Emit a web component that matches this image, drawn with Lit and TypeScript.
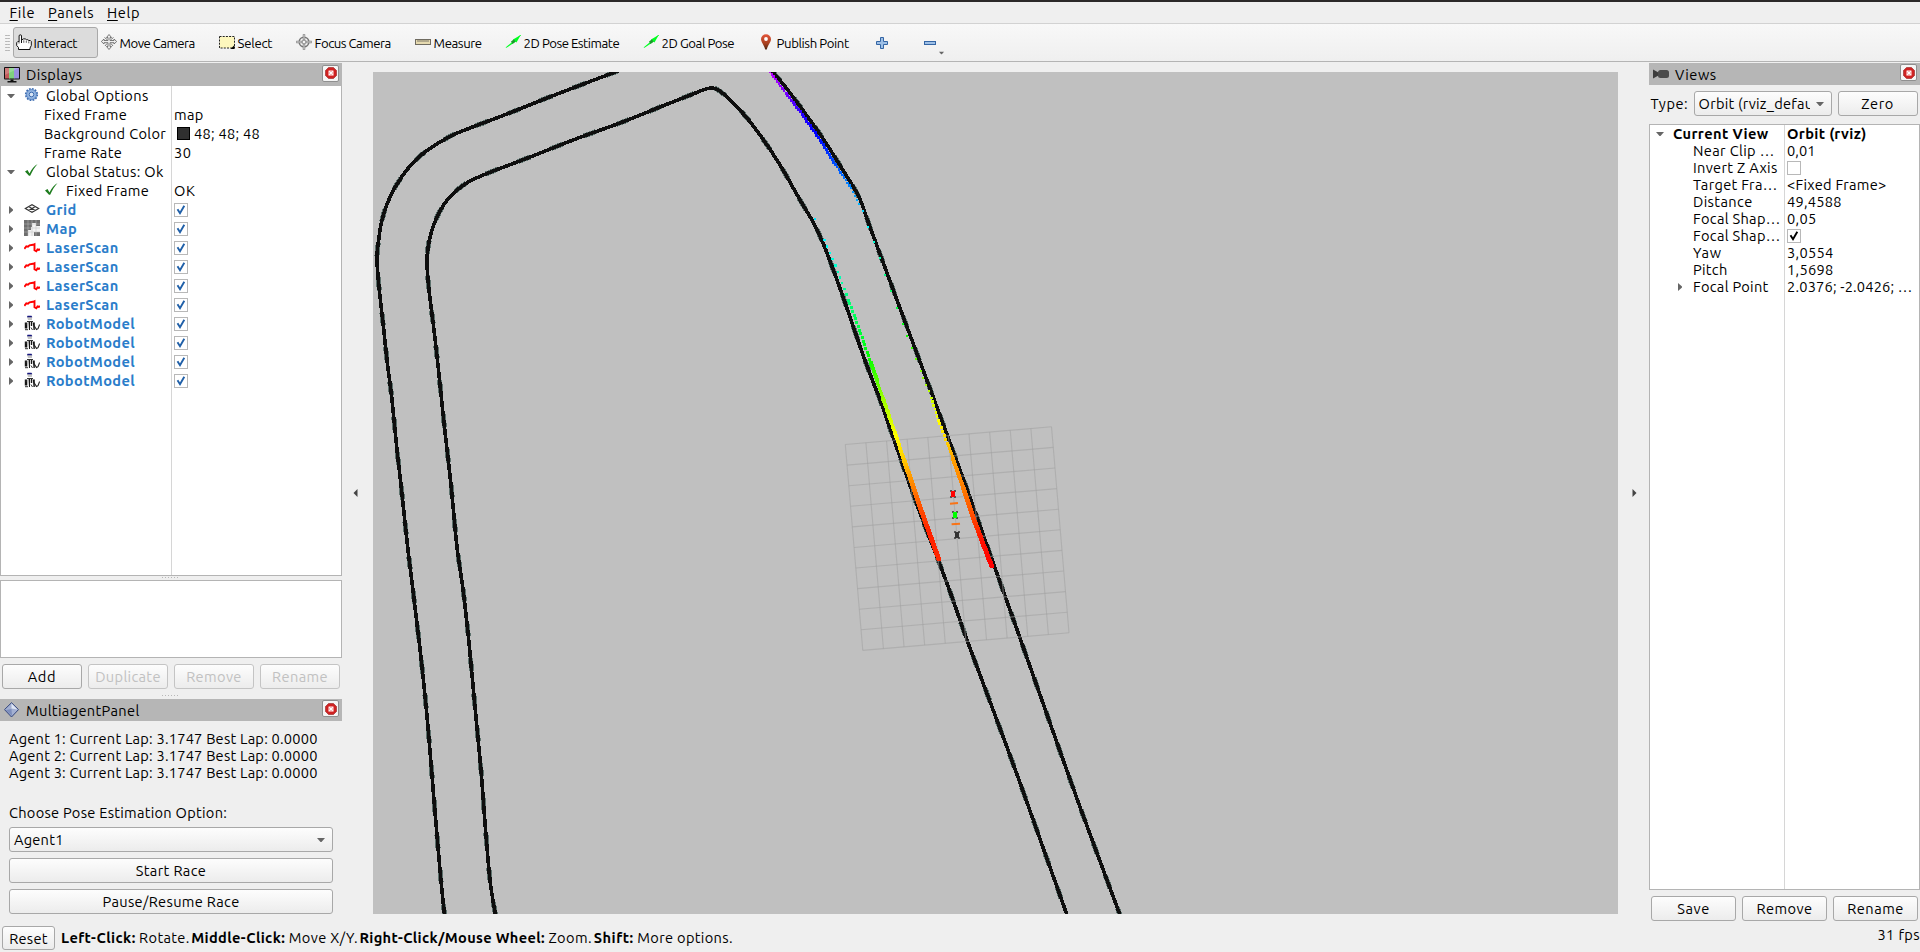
import { LitElement, html, svg, css, TemplateResult } from "lit";
import { customElement, property } from "lit/decorators.js";

/** A single line of text, tracked so that it takes up the width in `w`. */
@customElement("fit-text")
class FitText extends LitElement {
  @property({ type: Number }) w = 0;
  @property() text = "";
  @property() key = "";
  static styles = css`
    :host { display: inline-block; white-space: pre; flex: none; }
    .key { text-decoration: underline; text-decoration-thickness: 1px; text-underline-offset: 2px; }
  `;
  render() {
    return html`<span class="run">${this.key ? html`<span class="key">${this.key}</span>` : ""}${this.text}</span>`;
  }
  updated() {
    const run = this.renderRoot.querySelector(".run") as HTMLElement;
    run.style.letterSpacing = "0";
    const natural = run.getBoundingClientRect().width;
    const n = (this.key + this.text).length;
    if (this.w && natural) run.style.letterSpacing = (this.w + 1.6 - natural) / n + "px";
  }
}

const t = (text: string, w: number, key = "") => html`<fit-text .text=${text} .w=${w} .key=${key}></fit-text>`;

const ic = (body: TemplateResult, w = 16, h = 16) =>
  html`<svg class="ic" width=${w} height=${h} viewBox="0 0 ${w} ${h}">${body}</svg>`;

const moveBody = svg`<g fill="#eee" stroke="#6a6a6a" stroke-width=".9" stroke-linejoin="round">
  <path d="M8 .5 10.5 3.5H9v3h4V5l2.7 2.5L13 10V8.700H9V12.500h1.500L8 15.500 5.500 12.500H7V8.700H3V10L.3 7.500 3 5v1.500h4v-3H5.500z"/>
  <path d="M3.500 3.500l2.500 2M12.500 3.500l-2.500 2M4 12l2-2.500M12 12l-2-2.500" fill="none"/></g>`;

const icons: Record<string, TemplateResult> = {
  hand: ic(svg`<path d="M5.500 9V2a1.200 1.200 0 0 0-2.400 0v5.500H1.800L.7 8.700v2.800L2.500 13.500v2H14v-1.500l1.300-2.500V7.500l-1-1h-1.500l-1-.8h-1.500l-1-.8H7.500L5.500 6" fill="#fff" stroke="#111" stroke-width="1"/><path d="M7.800 6.300v2.500M10.300 6.800v2M12.800 7.300v2M3 9.500V7" stroke="#333" stroke-width=".8"/>`),
  move: ic(moveBody),
  select: ic(svg`<rect x=".5" y="2.500" width="15" height="11.500" fill="#fdf7bd" stroke="#222" stroke-dasharray="2 1.200"/><path d="M15.500 11v4h-4z" fill="#000"/>`),
  focus: ic(svg`<g fill="none" stroke="#777"><circle cx="8" cy="8" r="4.800" stroke-width="1.500"/><circle cx="8" cy="8" r="2" stroke-width=".8"/></g><g fill="#e6e6e6" stroke="#777" stroke-width=".7"><path d="M7.200.3h1.600V6H7.200zM7.200 10h1.600v5.700H7.200zM.3 7.200H6v1.600H.3zM10 7.200h5.700v1.600H10z"/></g>`),
  measure: ic(svg`<rect x=".5" y="5.500" width="15" height="5" fill="#e6dab0" stroke="#6f6b60"/><path d="M3 6v2M5 6v2M7 6v2M9 6v2M11 6v2M13 6v2" stroke="#6f6b60" stroke-width=".9"/>`),
  arrow: ic(svg`<path d="M.5 13.500 9 6.500 8 5.500 15.700 1 11.500 8.500 10.500 7.800 1.500 13.800z" fill="#0f2"/><path d="M6 7.500l3-2.200 1.500 2.500L7.500 10z" fill="#1c9a2c"/><path d="M15.700 1l-5.500 5.600" stroke="#0f2"/>`),
  pin: ic(svg`<defs><linearGradient id="pg" x2="0" y2="1"><stop offset="0" stop-color="#e4553a"/><stop offset=".6" stop-color="#a8401f"/><stop offset="1" stop-color="#4a2410"/></linearGradient></defs><path d="M8 .200a5 5 0 0 1 5 5c0 3-3.200 5.500-4.200 10.400H7.200C6.200 10.700 3 8.200 3 5.200a5 5 0 0 1 5-5z" fill="url(#pg)"/><circle cx="8" cy="5" r="1.900" fill="#fff"/>`),
  plus: ic(svg`<path d="M4.500.5h3v4h4v3h-4v4h-3v-4h-4v-3h4z" fill="#9dbfe6" stroke="#3465a4"/>`, 12, 12),
  minus: ic(svg`<rect x=".5" y="4.500" width="11" height="3" fill="#9dbfe6" stroke="#3465a4"/>`, 12, 12),
  monitor: ic(svg`<rect x="0" y="0" width="16" height="12.500" rx="1" fill="#111"/><rect x="1" y="1" width="5" height="10.500" fill="#c25a5a"/><rect x="5" y="1" width="5.500" height="10.500" fill="#7fd07f"/><rect x="10" y="1" width="5" height="10.500" fill="#9a8fe0"/><path d="M1 1h14L1 8z" fill="#fff" opacity=".2"/><path d="M6.500 12.500h3v2h-3zM3.500 14h9v1.500h-9z" fill="#111"/>`),
  diamond: ic(svg`<path d="M7.500.7l7 6.900-7 7.400-7-7.400z" fill="#a3b0d2" stroke="#33457c"/><path d="M7.500 1.500l6 6-6-1z" fill="#dfe6f5"/><path d="M1.500 8l6-1 .5 7z" fill="#7e8fbd"/>`),
  camera: ic(svg`<path d="M0 3.500 5 6.200V9.800L0 12.500z" fill="#3c3c3c"/><rect x="5" y="4" width="11" height="8" rx="2.500" fill="#4a4a4a"/>`),
  gear: ic(svg`<circle cx="7.500" cy="7.500" r="5.600" fill="#8fb1df" stroke="#3d6cb0" stroke-width="2" stroke-dasharray="1.700 1.200"/><circle cx="7.500" cy="7.500" r="4.900" fill="#94b5e0" stroke="#5d88c4" stroke-width=".8"/><circle cx="7.500" cy="7.500" r="2.300" fill="#dbe7f6" stroke="#3d6cb0"/>`),
  ok: ic(svg`<path d="M1 8.500 3.500 7l2 3.500C7.500 6.500 10 3 13.500 1 10.500 4.500 8 8.500 6.200 12.800H5z" fill="#1d7c1d"/>`),
  grid: ic(svg`<g fill="none" stroke="#333" stroke-width="1.100"><path d="M1.300 7.500 8 3.700l6.700 3.800L8 11.300zM4.600 5.600l6.700 3.800M11.400 5.600 4.600 9.400"/></g>`),
  map: ic(svg`<rect width="16" height="16" fill="#f4f4f4"/><path d="M0 0h12v3H8v4H7v3H4v6H0zM12 0h4v6h-4zM10 12h6v4h-6z" fill="#6e6e6e"/><path d="M4 0v16M8 0v16M12 0v16M0 4h16M0 8h16M0 12h16" stroke="#bdbdbd" stroke-width=".5"/>`),
  laser: ic(svg`<path d="M.3 9.800 2.300 7.300 4 7.700 5.500 6.300 9 5.800 10.500 5.200V11.300L12.300 12.300 13.500 10.500 14.800 11 15.900 9.900" fill="none" stroke="#f00" stroke-width="1.900"/>`),
  robot: ic(svg`<path d="M3 1.500h5v3.500H4z" fill="#c4c4c4"/><path d="M3.500.8h4l.8 1.400H3z" fill="#15157e"/><path d="M.8 7.500h2.500v6H.8zM4.500 6.500H6v8.500H5zM6.800 6h1.400v5H6.800zM8.800 7.500h2v7.500H9.500z" fill="#161616"/><path d="M3 6.500h6M7 12.500l1.500 2.500M1.500 9h1.500" stroke="#333" stroke-width="1"/><path d="M10 10.500 12.500 14.500l1.500-.8 1.600-4.200" fill="none" stroke="#222" stroke-width="1.100"/><path d="M1 14.700h3" stroke="#333" stroke-width="1"/>`),
  down: html`<svg width="8" height="6" viewBox="0 0 8 6"><path d="M0 1h8L4.500 5h-1z" fill="#666"/></svg>`,
  right: html`<svg width="6" height="8" viewBox="0 0 6 8"><path d="M1 0v8L5 4.500v-1z" fill="#666"/></svg>`,
  close: html`<span class="close"><svg width="12" height="12" viewBox="0 0 12 12"><path d="M3.500.5h5l3 3v5l-3 3h-5l-3-3v-5z" fill="#cf2222" stroke="#a03030" stroke-width=".7"/><rect x="3" y="3" width="6" height="6" rx="1.500" fill="#e88"/><path d="M4.200 4.200l3.600 3.600M7.800 4.200L4.200 7.800" stroke="#fff" stroke-width="1.300"/></svg></span>`,
};

const check = (on: boolean, color: string) =>
  html`<span class="box">${on ? html`<svg width="12" height="12" viewBox="0 0 12 12"><path d="M2.500 5.200 5 9.200 9.300 1.800" fill="none" stroke=${color} stroke-width="1.900"/></svg>` : ""}</span>`;

/* ---------- toolbar ---------- */
const tools: [string, string, number, number][] = [
  ["hand", "Interact", 42, 85], ["move", "Move Camera", 73.5, 118], ["select", "Select", 33, 77],
  ["focus", "Focus Camera", 74.5, 119], ["measure", "Measure", 46.5, 90], ["arrow", "2D Pose Estimate", 94, 138],
  ["arrow", "2D Goal Pose", 71, 115], ["pin", "Publish Point", 70.5, 117],
];

/* ---------- 3D view ---------- */
type P = [number, number];
const outerLeft: P[] = [[618,71],[590,81.500],[547,98],[507,114],[470,128],[447,138],[420,156],[403,175],[390,197],[382,220],[378,245],[377,260],[379,287],[383,323],[387,360],[392,400],[397,450],[401,485],[408,550],[415,607],[422,667],[428,727],[434,800],[440,870],[444.500,915]];
const inner: P[] = [[495.500,915],[490,880],[485,823],[481,770],[475,707],[469,643],[463.500,593],[457,547],[451,485],[444,423],[438.500,370],[434,330],[429,290],[427,260],[430,237],[437,217],[448,199],[465,184],[487,173.500],[525,159],[577,138.500],[620,123],[660,107],[693,94],[706,89],[715,88.500],[727,97],[747,118],[767,145],[783,170],[800,200],[813,222],[823,243],[837,280],[850,317],[863,355],[875,387],[880.500,401],[900,457],[920,513],[939,562],[953,600],[967,640],[995,715],[1019,780],[1043.500,849],[1067,915]];
const outerRight: P[] = [[772,71],[787,89],[802,109],[822,137],[841,167],[859,197],[868.500,223],[887,273],[905.500,323],[923.500,371],[935,402],[949,440],[968,492],[984,537],[992.500,561],[1020,638],[1050,723],[1080,807],[1120,915]];
const curve = (p: P[]) => {
  let d = `M${p[0]}`;
  for (let i = 0; i + 1 < p.length; i++) {
    const a = p[i - 1] ?? p[i], b = p[i], c = p[i + 1], e = p[i + 2] ?? c;
    d += `C${b[0] + (c[0] - a[0]) / 6},${b[1] + (c[1] - a[1]) / 6} ${c[0] - (e[0] - b[0]) / 6},${c[1] - (e[1] - b[1]) / 6} ${c}`;
  }
  return d;
};

/* x, y, hue, gap between returns, size of a return */
type S = [number, number, number, number, number];
const scanA: S[] = [[814.500,218.500,186,24,2],[824.500,240,182,7,2.500],[838,272,165,6,2.500],[848.500,300,148,4,3],[859.500,330,135,4,3],[871,363,115,3,3.500],[882.500,397,85,2,3.500],[895,433,62,1.500,3.500],[904,460,48,1,4],[912,483,33,1,4],[920,507,20,1,4],[929,532,8,1,4],[939,560,9,1,4]];
const scanB: S[] = [[770,72,285,3,2.500],[786,93,268,3,3],[802,114,250,3,3],[820,140,236,3,3],[837,167,220,3,2.500],[851,188,208,4,2],[859,204,198,6,2],[862.500,211,190,15,2],[879.500,258,160,16,2],[903,324,125,13,2],[920.500,371,90,8,2],[931.500,398,72,4,2.500],[938,420,60,4,3],[947,443,48,3,3],[953,459,38,1,3.500],[963,487,30,1,4],[973,517,18,1,4],[982,541,4,1,4],[992,567,0,1,4]];
const returns = (scan: S[]) => {
  const out: TemplateResult[] = [];
  for (let i = 0; i + 1 < scan.length; i++) {
    const [x, y, h, g, s] = scan[i], [x2, y2, h2] = scan[i + 1];
    const n = Math.max(1, Math.round(Math.hypot(x2 - x, y2 - y) / g));
    for (let k = 0; k < n; k++) {
      const f = k / n;
      out.push(svg`<rect x=${x + (x2 - x) * f - s / 2} y=${y + (y2 - y) * f - s / 2} width=${s} height=${s} fill="hsl(${h + (h2 - h) * f} 100% 50%)"/>`);
    }
  }
  return out;
};
const TL: P = [845.300, 444.500], TR: P = [1051.500, 426.800], BR: P = [1069, 632.800], BL: P = [862.800, 650.400];
const mix = (a: P, b: P, f: number): P => [a[0] + (b[0] - a[0]) * f, a[1] + (b[1] - a[1]) * f];
const gridLines = () => {
  const out: TemplateResult[] = [];
  const add = (a: P, b: P) => out.push(svg`<path d="M${a} L${b}"/>`);
  for (let i = 0; i <= 10; i++) {
    add(mix(TL, BL, i / 10), mix(TR, BR, i / 10));
    add(mix(TL, TR, i / 10), mix(BL, BR, i / 10));
  }
  return out;
};
const car = (x: number, y: number, c: string) => svg`<g transform="translate(${x} ${y})" shape-rendering="crispEdges">
  <path d="M-3-4h2v2h-2zM1-4h2v2h-2zM-3 2h2v2h-2zM1 2h2v2h-2z" fill="#555"/><rect x="-2" y="-3" width="4" height="6" fill=${c}/></g>`;

/* ---------- trees ---------- */
const blue = "#1f5fa8";
type Row = { ind: number; arrow?: string; icon?: string; name: string; w: number; link?: boolean; val?: TemplateResult };
const displays: Row[] = [
  { ind: 45, arrow: "down", icon: "gear", name: "Global Options", w: 101 },
  { ind: 43, name: "Fixed Frame", w: 81.5, val: t("map", 28) },
  { ind: 43, name: "Background Color", w: 120.5, val: html`<i class="swatch"></i>${t("48; 48; 48", 64.500)}` },
  { ind: 43, name: "Frame Rate", w: 76.5, val: t("30", 16) },
  { ind: 45, arrow: "down", icon: "ok", name: "Global Status: Ok", w: 116 },
  { ind: 65, icon: "ok", name: "Fixed Frame", w: 81.5, val: t("OK", 20) },
  ...([["grid", "Grid", 29], ["map", "Map", 29.500], ...Array(4).fill(["laser", "LaserScan", 71]), ...Array(4).fill(["robot", "RobotModel", 87.500])] as [string, string, number][])
    .map(([icon, name, w]) => ({ ind: 45, arrow: "right", icon, name, w, link: true, val: check(true, blue) })),
];
type VRow = { arrow?: string; name: string; w: number; val: TemplateResult };
const views: VRow[] = [
  { name: "Near Clip …", w: 80, val: t("0,01", 27) },
  { name: "Invert Z Axis", w: 83, val: check(false, "#000") },
  { name: "Target Fra…", w: 83, val: t("<Fixed Frame>", 98) },
  { name: "Distance", w: 58, val: t("49,4588", 53) },
  { name: "Focal Shap…", w: 86, val: t("0,05", 28) },
  { name: "Focal Shap…", w: 86, val: check(true, "#000") },
  { name: "Yaw", w: 27, val: t("3,0554", 45) },
  { name: "Pitch", w: 33, val: t("1,5698", 45) },
  { arrow: "right", name: "Focal Point", w: 74, val: t("2.0376; -2.0426; …", 124) },
];

@customElement("app-root")
class AppRoot extends LitElement {
  static styles = css`
    :host { display: flex; flex-direction: column; width: 1920px; height: 952px; box-sizing: border-box; border-top: 2px solid #2b2929; background: #efefef; color: #000; overflow: hidden; font: 14.6px/19px Ubuntu, "Noto Sans", sans-serif; }
    * { box-sizing: border-box; }
    svg { display: block; flex: none; }
    b { font-weight: 700; }
    .menubar { display: flex; flex: none; height: 22px; border-bottom: 1px solid #d2d2d2; padding: 1px 0 0 9.5px; }
    .menu { flex: none; }
    .menu.file { width: 38.5px; } .menu.panels { width: 59px; }
    .toolbar { display: flex; flex: none; height: 38px; align-items: center; padding-left: 5px; background: linear-gradient(#f8f8f8, #efefef); border-bottom: 1px solid #b4b4b4; font-size: 13.2px; }
    .toolbar fit-text { margin-top: 2px; }
    .grip { width: 5px; height: 18px; margin-right: 3px; background: radial-gradient(circle, #b4b4b4 0.8px, transparent 1px) 0 0 / 2.5px 3px; }
    .tool { display: flex; flex: none; align-items: center; height: 31px; gap: 2.6px; padding: 0 0 0 3px; border-radius: 3px; }
    .tool.on { gap: 1.5px; background: #dcdcdc; border: 1px solid #a9a9a9; padding-left: 2px; }
    .tool .ic { margin-top: -1px; }
    .add { margin-left: 4px; margin-right: 36px; }
    .remove { position: relative; }
    .more { position: absolute; left: 15px; top: 14px; }
    .more svg { width: 5px; height: 4px; }
    .main { display: flex; flex: none; height: 859px; padding-top: 1px; }
    .left { display: flex; flex-direction: column; width: 342px; flex: none; }
    .right { display: flex; flex-direction: column; width: 271px; flex: none; }
    .title { display: flex; flex: none; align-items: center; height: 23px; background: #b6b6b6; padding: 0 3px 0 4px; }
    .title.short { height: 22px; }
    .title .ic { margin-right: 6px; }
    .grow { flex: 1; }
    .close { display: flex; align-items: center; justify-content: center; width: 17px; height: 17px; margin-bottom: 3px; background: #f5f5f5; border: 1px solid #8f8f8f; border-radius: 2px; }
    .tree { display: grid; flex: none; background: #fff; border: 1px solid #b4b4b4; }
    .left .tree { grid-template-columns: 171px 1fr; height: 490px; border-top: 0; }
    .right .tree { grid-template-columns: 135px 1fr; height: 766px; margin-top: 8px; line-height: 17px; }
    .col { overflow: hidden; }
    .names { border-right: 1px solid #d6d6d6; }
    .row { display: flex; align-items: center; height: 19px; }
    .right .row { height: 17px; }
    .values .row { padding-left: 2px; }
    .lead { display: flex; flex: none; align-items: center; }
    .exp { display: flex; justify-content: center; width: 19px; }
    .lead .ic { margin: -1px 0 0 4px; }
    .lead.deep { padding-left: 22px; }
    .lead.deep .ic { margin-left: 21px; }
    .link { font-weight: 700; color: #2a7dca; }
    .bold { font-weight: 700; }
    .box { display: flex; width: 14px; height: 14px; border: 1px solid #b8b8b8; background: #fff; }
    .swatch { width: 13px; height: 13px; background: #303030; border: 1px solid #000; margin: 0 4px 0 3px; }
    .dots { align-self: center; flex: none; width: 18px; height: 1px; background: repeating-linear-gradient(90deg, #b8b8b8 0 1px, transparent 1px 3px); }
    .dots.mid { margin: 1px 0 2px; } .dots.low { margin: 6px 0 3px; }
    .desc { height: 78px; flex: none; background: #fff; border: 1px solid #b4b4b4; }
    .btns { display: flex; flex: none; gap: 6px; padding: 0 2px; margin-top: 6px; }
    .btn { display: flex; flex: 1; align-items: center; justify-content: center; height: 25px; flex-shrink: 0; border: 1px solid #a8a8a8; border-radius: 3px; background: linear-gradient(#fdfdfd, #ececec); }
    .btn.off { color: #c1c1c1; border-color: #c4c4c4; }
    .agents { padding: 9px 9px 0 9px; line-height: 17px; }
    .agents .ln { display: flex; height: 17px; }
    .agents .ln.choose { margin: 23px 0 6px; }
    .agents .btn, .agents .combo { width: 324px; margin: 0 0 6px 0; }
    .combo { display: flex; align-items: center; height: 25px; border: 1px solid #a8a8a8; border-radius: 3px; background: linear-gradient(#fdfdfd, #ececec); padding: 0 7px 0 4px; }
    .side { display: flex; flex: none; align-items: center; justify-content: center; padding-top: 2px; }
    .side.l { width: 31px; padding-right: 4px; } .side.r { width: 31px; padding-left: 2px; }
    .view { flex: none; width: 1245px; height: 842px; margin-top: 9px; background: #c0c0c0; }
    .type { display: flex; align-items: center; height: 31px; padding: 6px 2px 0 1.500px; }
    .type .combo { width: 138px; margin: 0 6px 0 5.500px; }
    .clip { width: 111px; overflow: hidden; height: 19px; }
    .type .btn { flex: none; width: 80px; }
    .status { display: flex; flex: none; align-items: flex-start; padding: 5px 0 0 2px; height: 31px; }
    .status .btn { flex: none; width: 53px; height: 24px; margin-right: 6px; }
    .hint { display: flex; gap: 1.500px; padding-top: 2px; }
    .hint b { margin-right: 2px; }
    .fps { margin-top: -1px; }
  `;

  private view() {
    const walls = [outerLeft, inner, outerRight].map(curve);
    return html`<svg class="view" viewBox="373 72 1245 842">
      <g fill="none" stroke="#5d716d" stroke-width="5" stroke-dasharray="13 22" shape-rendering="crispEdges">
        ${walls.map((d) => svg`<path d=${d}/>`)}
      </g>
      <g fill="none" stroke="#0e0e0e" stroke-width="3.600" stroke-linejoin="round" shape-rendering="crispEdges">
        ${walls.map((d) => svg`<path d=${d}/>`)}
      </g>
      <g stroke="#a0a0a0" stroke-opacity=".55" stroke-width="1.100">${gridLines()}</g>
      <g shape-rendering="crispEdges">${returns(scanA)}${returns(scanB)}</g>
      ${car(953, 494, "#f00")}${car(955, 515, "#0f0")}${car(957, 535, "#333")}
      <path d="M950 503.800l8-.8M951.600 524.300l8.400-.6" stroke="#f97316" stroke-width="2"/>
    </svg>`;
  }

  render() {
    return html`
      <div class="menubar">
        <span class="menu file">${t("ile", 24, "F")}</span>
        <span class="menu panels">${t("anels", 44.500, "P")}</span>
        <span class="menu">${t("elp", 31.500, "H")}</span>
      </div>
      <div class="toolbar">
        <span class="grip"></span>
        ${tools.map(([i, n, w, bw], k) => html`<div class="tool ${k ? "" : "on"}" style="width:${bw}px">${icons[i]}${t(n, w)}</div>`)}
        <span class="add">${icons.plus}</span><span class="remove">${icons.minus}<span class="more">${icons.down}</span></span>
      </div>
      <div class="main">
        <div class="left">
          <div class="title">${icons.monitor}${t("Displays", 55)}<span class="grow"></span>${icons.close}</div>
          <div class="tree">
            <div class="col names">${displays.map((r) => html`<div class="row ${r.link ? "link" : ""}">
              <span class="lead ${r.ind === 65 ? "deep" : ""}" style="width:${r.ind}px">${r.ind === 65 ? "" : html`<span class="exp">${r.arrow ? icons[r.arrow] : ""}</span>`}${r.icon ? icons[r.icon] : ""}</span>${t(r.name, r.w)}</div>`)}</div>
            <div class="col values">${displays.map((r) => html`<div class="row">${r.val ?? ""}</div>`)}</div>
          </div>
          <div class="dots mid"></div>
          <div class="desc"></div>
          <div class="btns">
            <span class="btn">${t("Add", 27)}</span><span class="btn off">${t("Duplicate", 64)}</span>
            <span class="btn off">${t("Remove", 54)}</span><span class="btn off">${t("Rename", 54.500)}</span>
          </div>
          <div class="dots low"></div>
          <div class="title short">${icons.diamond}${t("MultiagentPanel", 112)}<span class="grow"></span>${icons.close}</div>
          <div class="agents">
            ${[1, 2, 3].map((n) => html`<div class="ln">${t(`Agent ${n}: Current Lap: 3.1747 Best Lap: 0.0000`, 307)}</div>`)}
            <div class="ln choose">${t("Choose Pose Estimation Option:", 216.500)}</div>
            <div class="combo">${t("Agent1", 48)}<span class="grow"></span>${icons.down}</div>
            <div class="btn">${t("Start Race", 69)}</div>
            <div class="btn">${t("Pause/Resume Race", 135.500)}</div>
          </div>
        </div>
        <div class="side l"><svg width="5" height="8" viewBox="0 0 5 8"><path d="M4.500 0v8L.5 4z" fill="#444"/></svg></div>
        ${this.view()}
        <div class="side r"><svg width="5" height="8" viewBox="0 0 5 8"><path d="M.5 0v8l4-4z" fill="#444"/></svg></div>
        <div class="right">
          <div class="title short">${icons.camera}${t("Views", 40)}<span class="grow"></span>${icons.close}</div>
          <div class="type">${t("Type:", 36)}<div class="combo"><span class="clip">${t("Orbit (rviz_defau", 113)}</span><span class="grow"></span>${icons.down}</div><span class="btn">${t("Zero", 31)}</span></div>
          <div class="tree">
            <div class="col names">
              <div class="row bold"><span class="lead" style="width:23px"><span class="exp">${icons.down}</span></span>${t("Current View", 94)}</div>
              ${views.map((r) => html`<div class="row"><span class="lead" style="width:43px;padding-left:20px"><span class="exp">${r.arrow ? icons[r.arrow] : ""}</span></span>${t(r.name, r.w)}</div>`)}
            </div>
            <div class="col values">
              <div class="row bold">${t("Orbit (rviz)", 78)}</div>
              ${views.map((r) => html`<div class="row">${r.val}</div>`)}
            </div>
          </div>
          <div class="btns"><span class="btn">${t("Save", 31)}</span><span class="btn">${t("Remove", 54.500)}</span><span class="btn">${t("Rename", 55)}</span></div>
        </div>
      </div>
      <div class="status">
        <span class="btn">${t("Reset", 37)}</span>
        <div class="hint">
          <b>${t("Left-Click:", 73)}</b>${t("Rotate.", 49)}<b>${t("Middle-Click:", 92.500)}</b>${t("Move X/Y.", 67.500)}
          <b>${t("Right-Click/Mouse Wheel:", 184)}</b>${t("Zoom.", 42)}<b>${t("Shift:", 38.500)}</b>${t("More options.", 94)}
        </div>
        <span class="grow"></span><span class="fps">${t("31 fps", 41)}</span>
      </div>`;
  }
}
